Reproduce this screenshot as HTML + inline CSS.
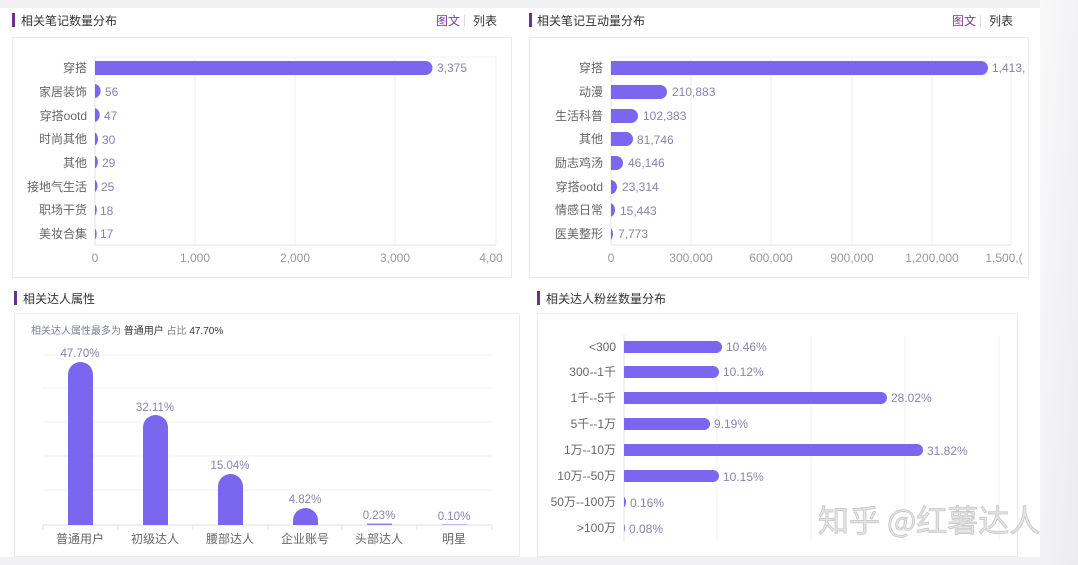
<!DOCTYPE html>
<html><head><meta charset="utf-8"><style>
html,body{margin:0;padding:0;width:1078px;height:565px;overflow:hidden;background:#f1f1f4;}
svg{display:block;font-family:"Liberation Sans","Noto Sans CJK SC",sans-serif;}
</style></head><body>
<svg width="1078" height="565" viewBox="0 0 1078 565" xmlns="http://www.w3.org/2000/svg">
<defs>
<linearGradient id="rg" x1="0" y1="0" x2="1" y2="1"><stop offset="0" stop-color="#f9f9fa"/><stop offset="1" stop-color="#ececf0"/></linearGradient>
<clipPath id="c1"><rect x="95" y="0" width="420" height="280"/></clipPath>
<clipPath id="c2"><rect x="611" y="0" width="420" height="280"/></clipPath>
<clipPath id="c3"><rect x="0" y="300" width="520" height="225"/></clipPath>
<clipPath id="c4"><rect x="624" y="300" width="420" height="260"/></clipPath>
</defs>
<rect x="0" y="8" width="1045" height="549" fill="#fff"/>
<rect x="1040" y="0" width="38" height="565" fill="url(#rg)"/>
<!-- Panel 1 -->
<rect x="12" y="13" width="3" height="14" fill="#6b2f91"/>
<text x="21" y="25" font-size="12" fill="#333">相关笔记数量分布</text>
<text x="436" y="25" font-size="12" fill="#7a3aa0">图文</text>
<rect x="464" y="15" width="1" height="12" fill="#ddd"/>
<text x="473" y="25" font-size="12" fill="#333">列表</text>
<rect x="12.5" y="37.5" width="499" height="240" fill="none" stroke="#ececf0"/>
<g stroke="#f0f0f2"><line x1="95" y1="57" x2="496" y2="57"/><line x1="195" y1="57" x2="195" y2="245"/><line x1="295" y1="57" x2="295" y2="245"/><line x1="395" y1="57" x2="395" y2="245"/><line x1="496" y1="57" x2="496" y2="245"/></g>
<line x1="95" y1="57" x2="95" y2="245" stroke="#e3e3e6"/>
<line x1="95" y1="245" x2="496" y2="245" stroke="#e3e3e6"/>
<g clip-path="url(#c1)" fill="#7b66f0">
<rect x="88" y="61" width="344.5" height="14" rx="7"/>
<rect x="88" y="84" width="12.6" height="14" rx="7"/>
<rect x="88" y="108" width="11.7" height="14" rx="7"/>
<rect x="88" y="132" width="10" height="14" rx="7"/>
<rect x="88" y="155" width="9.9" height="14" rx="7"/>
<rect x="88" y="179" width="9.5" height="14" rx="7"/>
<rect x="88" y="203" width="8.8" height="14" rx="7"/>
<rect x="88" y="227" width="8.7" height="14" rx="7"/>
</g>
<g font-size="12" fill="#666" text-anchor="end">
<text x="87" y="72">穿搭</text><text x="87" y="96">家居装饰</text><text x="87" y="120">穿搭ootd</text><text x="87" y="143">时尚其他</text><text x="87" y="167">其他</text><text x="87" y="191">接地气生活</text><text x="87" y="214">职场干货</text><text x="87" y="238">美妆合集</text>
</g>
<g font-size="12" fill="#8a82b0">
<text x="437" y="72">3,375</text><text x="105" y="96">56</text><text x="104" y="120">47</text><text x="102" y="144">30</text><text x="102" y="167">29</text><text x="101" y="191">25</text><text x="100" y="215">18</text><text x="100" y="238">17</text>
</g>
<g font-size="12" fill="#999" text-anchor="middle">
<text x="95" y="262">0</text><text x="195" y="262">1,000</text><text x="295" y="262">2,000</text><text x="395" y="262">3,000</text><text x="491" y="262">4,00</text>
</g>
<!-- Panel 2 -->
<rect x="529" y="13" width="3" height="14" fill="#6b2f91"/>
<text x="537" y="25" font-size="12" fill="#333">相关笔记互动量分布</text>
<text x="952" y="25" font-size="12" fill="#7a3aa0">图文</text>
<rect x="980" y="15" width="1" height="12" fill="#ddd"/>
<text x="989" y="25" font-size="12" fill="#333">列表</text>
<rect x="529.5" y="37.5" width="499" height="240" fill="none" stroke="#ececf0"/>
<g stroke="#f0f0f2"><line x1="611" y1="57" x2="1011" y2="57"/><line x1="691" y1="57" x2="691" y2="245"/><line x1="771" y1="57" x2="771" y2="245"/><line x1="852" y1="57" x2="852" y2="245"/><line x1="932" y1="57" x2="932" y2="245"/><line x1="1011" y1="57" x2="1011" y2="245"/></g>
<line x1="611" y1="57" x2="611" y2="245" stroke="#e3e3e6"/>
<line x1="611" y1="245" x2="1011" y2="245" stroke="#e3e3e6"/>
<g clip-path="url(#c2)" fill="#7b66f0">
<rect x="604" y="61" width="384" height="14" rx="7"/>
<rect x="604" y="85" width="63" height="14" rx="7"/>
<rect x="604" y="109" width="34" height="14" rx="7"/>
<rect x="604" y="132" width="29" height="14" rx="7"/>
<rect x="604" y="156" width="19" height="14" rx="7"/>
<rect x="604" y="180" width="13" height="14" rx="7"/>
<rect x="604" y="203" width="11" height="14" rx="7"/>
<rect x="604" y="227" width="9" height="14" rx="7"/>
</g>
<g font-size="12" fill="#666" text-anchor="end">
<text x="603" y="72">穿搭</text><text x="603" y="96">动漫</text><text x="603" y="120">生活科普</text><text x="603" y="143">其他</text><text x="603" y="167">励志鸡汤</text><text x="603" y="191">穿搭ootd</text><text x="603" y="214">情感日常</text><text x="603" y="238">医美整形</text>
</g>
<g font-size="12" fill="#8a82b0">
<text x="992" y="72">1,413,</text><text x="672" y="96">210,883</text><text x="643" y="120">102,383</text><text x="637" y="144">81,746</text><text x="628" y="167">46,146</text><text x="622" y="191">23,314</text><text x="620" y="215">15,443</text><text x="618" y="238">7,773</text>
</g>
<g font-size="12" fill="#999" text-anchor="middle">
<text x="611" y="262">0</text><text x="691" y="262">300,000</text><text x="771" y="262">600,000</text><text x="852" y="262">900,000</text><text x="932" y="262">1,200,000</text><text x="1004" y="262">1,500,(</text>
</g>
<!-- Panel 3 -->
<rect x="14" y="291" width="3" height="14" fill="#6b2f91"/>
<text x="23" y="303" font-size="12" fill="#333">相关达人属性</text>
<rect x="14.5" y="313.5" width="505" height="243" fill="none" stroke="#ececf0"/>
<text x="31" y="334" font-size="10" fill="#7a8090">相关达人属性最多为 <tspan fill="#333">普通用户</tspan> 占比 <tspan fill="#333">47.70%</tspan></text>
<g stroke="#f0f0f2"><line x1="43" y1="355" x2="492" y2="355"/><line x1="43" y1="388" x2="492" y2="388"/><line x1="43" y1="422" x2="492" y2="422"/><line x1="43" y1="456" x2="492" y2="456"/><line x1="43" y1="490" x2="492" y2="490"/></g>
<line x1="43" y1="525" x2="492" y2="525" stroke="#dcdce0"/>
<g stroke="#dcdce0"><line x1="43" y1="525" x2="43" y2="530"/><line x1="118" y1="525" x2="118" y2="530"/><line x1="193" y1="525" x2="193" y2="530"/><line x1="268" y1="525" x2="268" y2="530"/><line x1="342" y1="525" x2="342" y2="530"/><line x1="417" y1="525" x2="417" y2="530"/><line x1="492" y1="525" x2="492" y2="530"/></g>
<g clip-path="url(#c3)" fill="#7b66f0">
<rect x="68" y="362" width="25" height="180" rx="12.5"/>
<rect x="143" y="415" width="25" height="130" rx="12.5"/>
<rect x="218" y="474" width="25" height="70" rx="12.5"/>
<rect x="293" y="508" width="25" height="40" rx="12.5"/>
<rect x="367" y="523.5" width="25" height="1.5" fill="#8f7cf2"/>
<rect x="442" y="524.3" width="25" height="0.7" fill="#a898f5"/>
</g>
<g font-size="11.5" fill="#8a82b0" text-anchor="middle">
<text x="80" y="357">47.70%</text><text x="155" y="411">32.11%</text><text x="230" y="469">15.04%</text><text x="305" y="503">4.82%</text><text x="379" y="519">0.23%</text><text x="454" y="520">0.10%</text>
</g>
<g font-size="12" fill="#666" text-anchor="middle">
<text x="80" y="543">普通用户</text><text x="155" y="543">初级达人</text><text x="230" y="543">腰部达人</text><text x="305" y="543">企业账号</text><text x="379" y="543">头部达人</text><text x="454" y="543">明星</text>
</g>
<!-- Panel 4 -->
<rect x="537" y="291" width="3" height="14" fill="#6b2f91"/>
<text x="546" y="303" font-size="12" fill="#333">相关达人粉丝数量分布</text>
<rect x="537.5" y="313.5" width="480" height="243" fill="none" stroke="#ececf0"/>
<g stroke="#f0f0f2"><line x1="717" y1="335" x2="717" y2="541"/><line x1="811" y1="335" x2="811" y2="541"/><line x1="905" y1="335" x2="905" y2="541"/><line x1="999" y1="335" x2="999" y2="541"/></g>
<line x1="624" y1="335" x2="624" y2="541" stroke="#e3e3e6"/>
<g clip-path="url(#c4)" fill="#7b66f0">
<rect x="618" y="341" width="104" height="12" rx="6"/>
<rect x="618" y="366" width="101" height="12" rx="6"/>
<rect x="618" y="392" width="269" height="12" rx="6"/>
<rect x="618" y="418" width="92" height="12" rx="6"/>
<rect x="618" y="444" width="305" height="12" rx="6"/>
<rect x="618" y="470" width="101" height="12" rx="6"/>
<rect x="618" y="496" width="8" height="12" rx="6"/>
<rect x="618" y="522" width="7" height="12" rx="6"/>
</g>
<g font-size="12" fill="#666" text-anchor="end">
<text x="616" y="351">&lt;300</text><text x="616" y="376">300--1千</text><text x="616" y="402">1千--5千</text><text x="616" y="428">5千--1万</text><text x="616" y="454">1万--10万</text><text x="616" y="480">10万--50万</text><text x="616" y="506">50万--100万</text><text x="616" y="532">&gt;100万</text>
</g>
<g font-size="12" fill="#8a82b0">
<text x="726" y="351">10.46%</text><text x="723" y="376">10.12%</text><text x="891" y="402">28.02%</text><text x="714" y="428">9.19%</text><text x="927" y="455">31.82%</text><text x="723" y="481">10.15%</text><text x="630" y="507">0.16%</text><text x="629" y="533">0.08%</text>
</g>
<text x="818" y="532" font-size="31" fill="#e4e4e4" stroke="#c4c4c4" stroke-width="0.7" font-family="'Noto Sans CJK SC',sans-serif">知乎 @红薯达人</text>
</svg>
</body></html>
